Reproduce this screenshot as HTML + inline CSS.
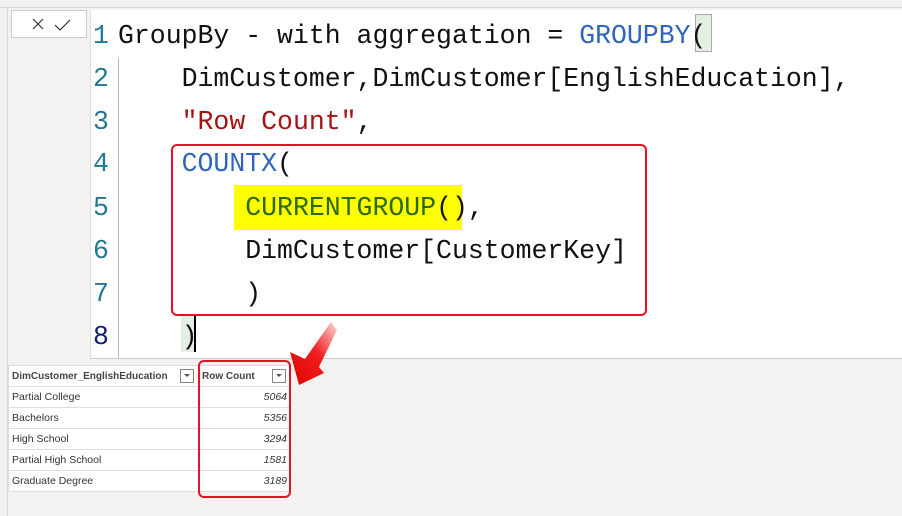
<!DOCTYPE html>
<html><head><style>
body{margin:0;width:902px;height:516px;background:#f3f2f1;position:relative;overflow:hidden;font-family:"Liberation Sans",sans-serif}
.rib{position:absolute;left:0;top:0;width:902px;height:7px;background:#f3f2f1;border-bottom:1px solid #d6d6d6}
.ed{position:absolute;left:90px;top:10px;width:812px;height:348px;background:#fff;border-left:1px solid #ddd;border-bottom:1px solid #ccc}
.ln{position:absolute;left:2px;font:26.5px "Liberation Mono",monospace;color:#237893}
.code{position:absolute;left:27px;font:26.5px "Liberation Mono",monospace;color:#111;white-space:pre}
.kw{color:#3165bd}.str{color:#a31515}
.btn{position:absolute;left:11px;top:10px;width:74px;height:26px;background:#fff;border:1px solid #ccc}
table{position:absolute;left:8px;top:365px;border-collapse:collapse;background:#fff;font-size:10.5px;table-layout:fixed;width:282px}
td{border:1px solid #ddd;height:20px;padding:0 3px;color:#333;white-space:nowrap;overflow:hidden}
th{border:1px solid #ddd;height:20px;padding:0 3px;text-align:left;font-weight:bold;color:#444;background:#fff;font-size:10px;white-space:nowrap;overflow:hidden}
.dd{display:inline-block;width:12px;height:12px;border:1px solid #888;vertical-align:middle;position:absolute;right:4px;top:3px}
.dd:after{content:"";position:absolute;left:3px;top:4px;border:3px solid transparent;border-top:3px solid #555}
th{position:relative}
.n{text-align:right;font-style:italic}
.box{position:absolute;border:2px solid #e81123;border-radius:6px}
</style></head><body>
<div class="rib"></div>
<div style="position:absolute;left:7px;top:8px;width:1px;height:508px;background:#d6d6d6"></div>
<div class="btn"><svg width="74" height="26"><path d="M21 8l10 10M31 8l-10 10" stroke="#333" stroke-width="1.2" fill="none"/><path d="M43 14l5 5 10-10" stroke="#333" stroke-width="1.2" fill="none"/></svg></div>
<div class="ed">
<div style="position:absolute;left:27px;top:48px;width:1px;height:300px;background:#bbb"></div>
<div style="position:absolute;left:604px;top:4px;width:15px;height:36px;background:#e4efe4;border:1px solid #aaa"></div>
<div style="position:absolute;left:90px;top:306px;width:13px;height:36px;background:#e4efe4;border-right:2px solid #000"></div>
<div style="position:absolute;left:143px;top:175px;width:228px;height:45px;background:#ffff00"></div>
<div class="ln" style="top:11px">1</div><div class="code" style="top:11px">GroupBy - with aggregation = <span class="kw">GROUPBY</span>(</div>
<div class="ln" style="top:54px">2</div><div class="code" style="top:54px">    DimCustomer,DimCustomer[EnglishEducation],</div>
<div class="ln" style="top:97px">3</div><div class="code" style="top:97px">    <span class="str">"Row Count"</span>,</div>
<div class="ln" style="top:139px">4</div><div class="code" style="top:139px">    <span class="kw">COUNTX</span>(</div>
<div class="ln" style="top:183px">5</div><div class="code" style="top:183px">        <span style="color:#2b6a00">CURRENTGROUP</span>(),</div>
<div class="ln" style="top:226px">6</div><div class="code" style="top:226px">        DimCustomer[CustomerKey]</div>
<div class="ln" style="top:269px">7</div><div class="code" style="top:269px">        )</div>
<div class="ln" style="top:312px;color:#0b216f">8</div><div class="code" style="top:312px">    )</div>
</div>
<div class="box" style="left:171px;top:144px;width:472px;height:168px"></div>
<table>
<colgroup><col style="width:190px"><col style="width:92px"></colgroup>
<tr><th>DimCustomer_EnglishEducation<span class="dd"></span></th><th>Row Count<span class="dd"></span></th></tr>
<tr><td>Partial College</td><td class="n">5064</td></tr>
<tr><td>Bachelors</td><td class="n">5356</td></tr>
<tr><td>High School</td><td class="n">3294</td></tr>
<tr><td>Partial High School</td><td class="n">1581</td></tr>
<tr><td>Graduate Degree</td><td class="n">3189</td></tr>
</table>
<div class="box" style="left:198px;top:360px;width:89px;height:134px"></div>
<svg style="position:absolute;left:0;top:0" width="902" height="516"><defs><linearGradient id="g" x1="1" y1="0" x2="0" y2="1"><stop offset="0" stop-color="#fbdcdc"/><stop offset="0.45" stop-color="#f02020"/><stop offset="1" stop-color="#e00000"/></linearGradient></defs><polygon points="299,385 290,352 305,359 331,322 337,330 319,367 324,373" fill="url(#g)"/></svg>
</body></html>
